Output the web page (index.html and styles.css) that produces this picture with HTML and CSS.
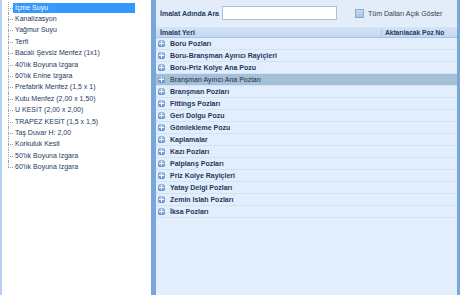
FILE: index.html
```html
<!DOCTYPE html>
<html>
	<head>
		<title>İmalat Aktarımı</title>
		<meta charset="utf-8">
		<link rel="stylesheet" href="styles.css">
	</head>
	<body>
		<main class="window">
			<div class="tree">
				<ul>
					<li class="selected"><span>İçme Suyu</span></li>
					<li><span>Kanalizasyon</span></li>
					<li><span>Yağmur Suyu</span></li>
					<li><span>Terfi</span></li>
					<li><span>Bacalı Şevsiz Menfez (1x1)</span></li>
					<li><span>40'lık Boyuna Izgara</span></li>
					<li><span>60'lık Enine Izgara</span></li>
					<li><span>Prefabrik Menfez (1,5 x 1)</span></li>
					<li><span>Kutu Menfez (2,00 x 1,50)</span></li>
					<li><span>U KESİT (2,00 x 2,00)</span></li>
					<li><span>TRAPEZ KESİT (1,5 x 1,5)</span></li>
					<li><span>Taş Duvar H: 2,00</span></li>
					<li><span>Korkuluk Kesit</span></li>
					<li><span>50'lık Boyuna Izgara</span></li>
					<li class="last"><span>60'lık Boyuna Izgara</span></li>
				</ul>
			</div>
			<div class="panel">
				<div class="search">
					<label class="search-label">İmalat Adında Ara</label>
					<input type="text" class="search-input">
					<label class="check"><span class="box"></span>Tüm Dalları Açık Göster</label>
				</div>
				<div class="grid">
					<div class="grid-head">
						<span class="col-name">İmalat Yeri</span>
						<span class="col-no">Aktarılacak Poz No</span>
					</div>
					<div class="row"><i class="plus"></i>Boru Pozları</div>
					<div class="row"><i class="plus"></i>Boru-Branşman Ayırıcı Rayiçleri</div>
					<div class="row"><i class="plus"></i>Boru-Priz Kolye Ana Pozu</div>
					<div class="row active"><i class="plus"></i>Branşman Ayırıcı Ana Pozları</div>
					<div class="row"><i class="plus"></i>Branşman Pozları</div>
					<div class="row"><i class="plus"></i>Fittings Pozları</div>
					<div class="row"><i class="plus"></i>Geri Dolgu Pozu</div>
					<div class="row"><i class="plus"></i>Gömlekleme Pozu</div>
					<div class="row"><i class="plus"></i>Kaplamalar</div>
					<div class="row"><i class="plus"></i>Kazı Pozları</div>
					<div class="row"><i class="plus"></i>Palplanş Pozları</div>
					<div class="row"><i class="plus"></i>Priz Kolye Rayiçleri</div>
					<div class="row"><i class="plus"></i>Yatay Delgi Pozları</div>
					<div class="row"><i class="plus"></i>Zemin Islah Pozları</div>
					<div class="row"><i class="plus"></i>İksa Pozları</div>
				</div>
			</div>
		</main>
	</body>
</html>
```

FILE: styles.css
```css
*{
	margin:0;
	padding:0;
	box-sizing:border-box;
}
body{
	background-color:#fff;
	font-family:"Liberation Sans", Arial, sans-serif;
	font-size:7px;
	color:#1e395b;
}
.window{
	display:flex;
	width:460px;
	height:295px;
}
.tree{
	width:153px;
	background:#fff;
	border-left:2px solid #b5cfee;
	border-right:2px solid #7aa5dc;
	padding-top:2px;
}
.tree ul{
	list-style:none;
	padding-left:6px;
}
.tree li{
	height:11.4px;
	display:flex;
	align-items:center;
	position:relative;
	padding-left:5px;
	color:#1e395b;
	white-space:nowrap;
}
/* dotted tree lines */
.tree li::before{
	content:"";
	position:absolute;
	left:0;
	top:0;
	bottom:0;
	border-left:1px dotted #a0a0a0;
}
.tree li.last::before{
	bottom:50%;
}
.tree li::after{
	content:"";
	position:absolute;
	left:0;
	top:50%;
	width:5px;
	border-top:1px dotted #a0a0a0;
}
.tree li span{
	padding:0 2px;
	line-height:10px;
}
.tree li.selected span{
	background:#3399ff;
	color:#fff;
	width:122px;
}
.panel{
	flex:1;
	display:flex;
	flex-direction:column;
	background:#e2eefc;
	border-left:3px solid #7ba6dc;
	border-right:3px solid #7ba6dc;
}
.search{
	height:25px;
	display:flex;
	align-items:center;
	padding-left:4px;
	padding-top:1px;
	background:#e3edf9;
}
.search-label{
	font-weight:bold;
	width:62px;
}
.search-input{
	width:115px;
	height:14px;
	border:1px solid #abc1de;
	background:#fff;
	outline:none;
}
.check{
	display:flex;
	align-items:center;
	margin-left:18px;
	color:#2c3e55;
}
.box{
	width:9px;
	height:9px;
	border:1px solid #8aa9cf;
	background:linear-gradient(#c9daef,#a9c3e4);
	margin-right:4px;
}
.grid{
	flex:1;
	margin-top:2px;
}
.grid-head{
	height:11px;
	display:flex;
	align-items:center;
	font-weight:bold;
	background:linear-gradient(#d4e3f5,#c3d7f0);
	border-bottom:1px solid #a9c3e4;
}
.col-name{
	flex:1;
	padding-left:4px;
}
.col-no{
	width:76px;
	padding-left:3px;
	border-left:1px solid #b3cbe8;
	font-size:6.6px;
}
.row{
	height:12px;
	display:flex;
	align-items:center;
	padding-left:2px;
	font-weight:bold;
	border-bottom:1px solid #d3e2f4;
}
.row.active{
	background:#a5bfd6;
	font-weight:normal;
	color:#1a2f4a;
}
.plus{
	width:7px;
	height:7px;
	margin-right:5px;
	border-radius:2px;
	background:linear-gradient(#9dbde6,#5b8cca);
	position:relative;
}
.plus::before,.plus::after{
	content:"";
	position:absolute;
	background:#fff;
}
.plus::before{
	left:1px;
	right:1px;
	top:3px;
	height:1px;
}
.plus::after{
	top:1px;
	bottom:1px;
	left:3px;
	width:1px;
}
```
